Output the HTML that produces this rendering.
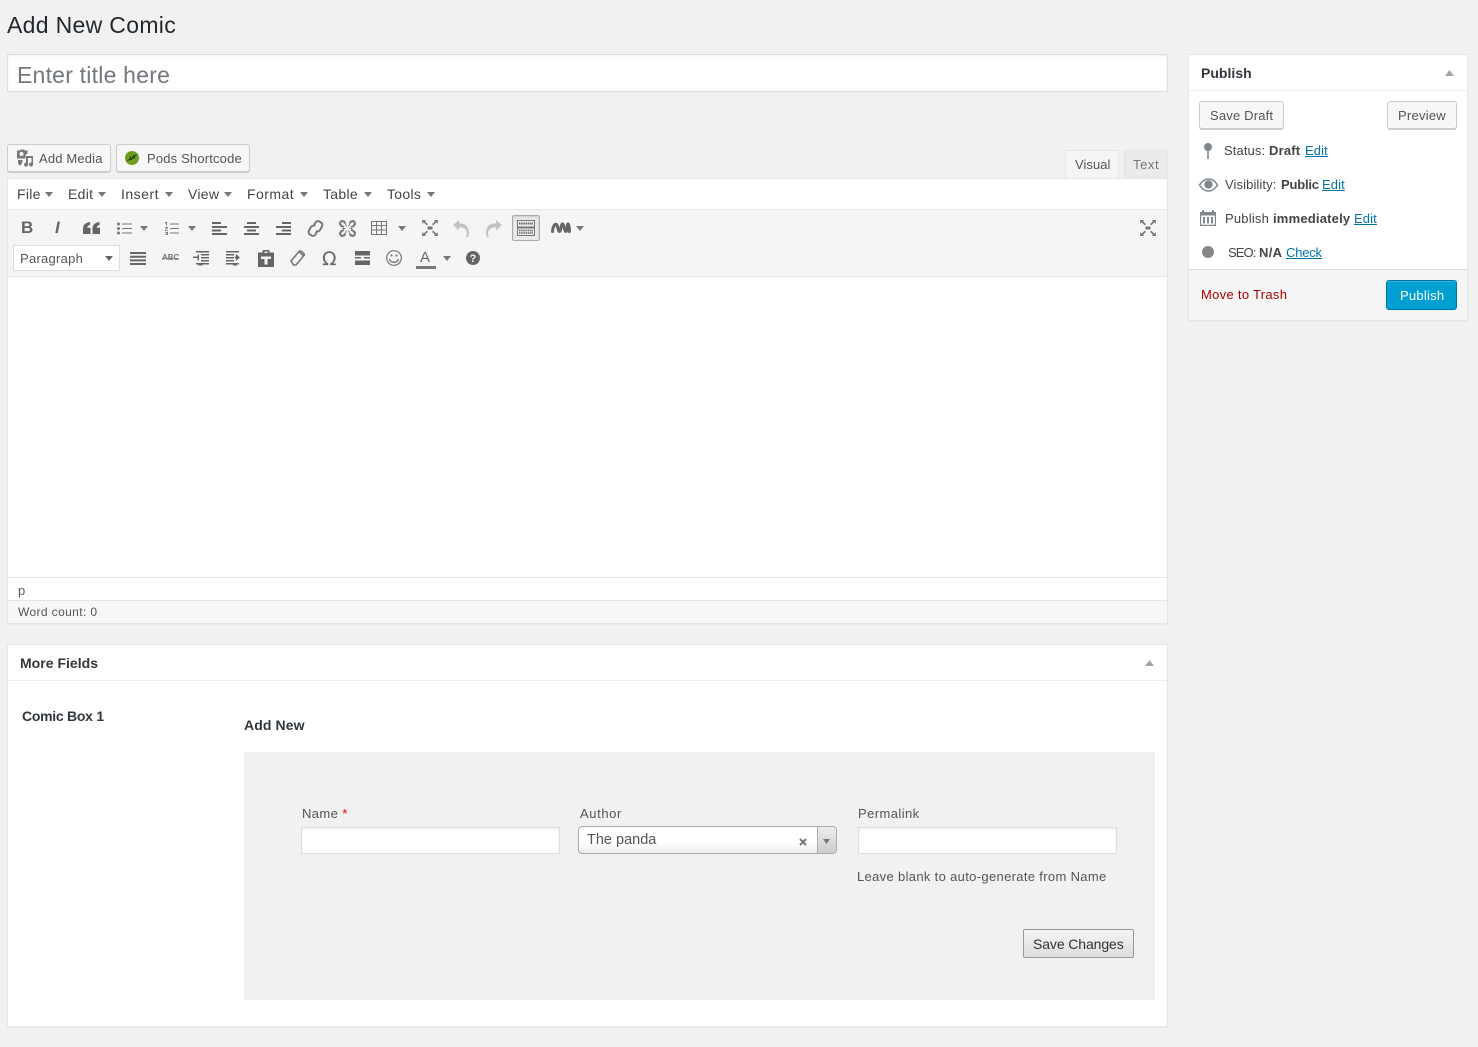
<!DOCTYPE html>
<html><head><meta charset="utf-8"><title>Add New Comic</title>
<style>
html,body{margin:0;padding:0;width:1478px;height:1047px;overflow:hidden;background:#f1f1f1}
body{position:relative;font-family:"Liberation Sans",sans-serif;font-size:13px;color:#444}
.b{position:absolute;box-sizing:border-box}
.t{position:absolute;white-space:nowrap;line-height:20px;font-size:13px;letter-spacing:.38px;color:#444}
.btn{position:absolute;box-sizing:border-box;background:#f7f7f7;border:1px solid #ccc;border-radius:3px;box-shadow:0 1px 0 #ccc}
.g{color:#555}
.m{color:#444;font-size:14px;letter-spacing:.3px}
.k{font-weight:bold;color:#444}
a{color:#0073aa;text-decoration:underline}
svg{position:absolute;overflow:visible}
.bx{background:#fff;border:1px solid #e5e5e5;box-shadow:0 1px 1px rgba(0,0,0,.04)}
.inp{background:#fff;border:1px solid #ddd;box-shadow:inset 0 1px 2px rgba(0,0,0,.07)}
</style></head><body>

<div class="t" style="left:7px;top:10px;line-height:30px;font-size:23px;letter-spacing:.32px;color:#23282d">Add New Comic</div>

<div class="b inp" style="left:7px;top:54px;width:1161px;height:38px"></div>
<div class="t" style="left:17px;top:60px;line-height:30px;font-size:23px;letter-spacing:.22px;color:#72777c">Enter title here</div>

<!-- media buttons -->
<div class="btn" style="left:7px;top:144px;width:104px;height:28px"></div>
<svg style="left:15px;top:149px" width="20" height="18" viewBox="0 0 20 18" fill="#777"><path d="M2 1.500h3l1-1h3l1 1h2.500v3l-2 1.500v3.500H2z"/><circle cx="6.500" cy="5" r="2.100" fill="#f7f7f7"/><path d="M3 11h4.500v2L5.500 16.500h-1L3 14zM11 7h7v8.500a2 2 0 1 1-1.500-1.900v-4.600h-3.500v6.500a2 2 0 1 1-2-1.900z"/></svg>
<div class="t g" style="left:39px;top:149px;letter-spacing:.16px">Add Media</div>
<div class="btn" style="left:116px;top:144px;width:134px;height:28px"></div>
<svg style="left:125px;top:151px" width="14" height="14" viewBox="0 0 14 14"><circle cx="7" cy="7" r="7" fill="#6f9e1e"/><path d="M2.500 9.500c3-1 6-3 9-6M5 5.500l1.500 2.500M8 4l1 2.500M4 8l3 .5M7 6.500l3 .5" stroke="#1f3d0c" stroke-width="1.100" fill="none"/></svg>
<div class="t g" style="left:147px;top:149px;letter-spacing:.17px">Pods Shortcode</div>

<!-- tabs -->
<div class="b" style="left:1065px;top:150px;width:54px;height:29px;background:#f5f5f5;border:1px solid #e5e5e5;border-bottom:0"></div>
<div class="t g" style="left:1075px;top:155px;letter-spacing:.05px">Visual</div>
<div class="b" style="left:1124px;top:150px;width:44px;height:29px;background:#ebebeb;border:1px solid #e5e5e5"></div>
<div class="t" style="left:1133px;top:155px;color:#777;letter-spacing:.6px">Text</div>

<!-- editor -->
<div class="b bx" style="left:7px;top:178px;width:1161px;height:446px"></div>
<div class="b" style="left:8px;top:209px;width:1159px;height:68px;background:#f5f5f5;border-top:1px solid #e5e5e5;border-bottom:1px solid #e5e5e5"></div>
<div class="b" style="left:8px;top:577px;width:1159px;height:1px;background:#e5e5e5"></div>
<div class="b" style="left:8px;top:600px;width:1159px;height:23px;background:#f7f7f7;border-top:1px solid #e5e5e5"></div>

<!-- menu -->
<div class="t m" style="left:17px;top:184px">File</div><svg style="left:45px;top:192px" width="8" height="5"><path d="M0 0h8L4 5z" fill="#777"/></svg>
<div class="t m" style="left:68px;top:184px">Edit</div><svg style="left:98px;top:192px" width="8" height="5"><path d="M0 0h8L4 5z" fill="#777"/></svg>
<div class="t m" style="left:121px;top:184px;letter-spacing:.5px">Insert</div><svg style="left:165px;top:192px" width="8" height="5"><path d="M0 0h8L4 5z" fill="#777"/></svg>
<div class="t m" style="left:188px;top:184px">View</div><svg style="left:224px;top:192px" width="8" height="5"><path d="M0 0h8L4 5z" fill="#777"/></svg>
<div class="t m" style="left:247px;top:184px;letter-spacing:.45px">Format</div><svg style="left:300px;top:192px" width="8" height="5"><path d="M0 0h8L4 5z" fill="#777"/></svg>
<div class="t m" style="left:323px;top:184px">Table</div><svg style="left:364px;top:192px" width="8" height="5"><path d="M0 0h8L4 5z" fill="#777"/></svg>
<div class="t m" style="left:387px;top:184px">Tools</div><svg style="left:427px;top:192px" width="8" height="5"><path d="M0 0h8L4 5z" fill="#777"/></svg>

<!-- toolbar row 1 -->
<div class="t" style="left:21px;top:218px;font-size:17px;font-weight:bold;color:#666;letter-spacing:0">B</div>
<div class="t" style="left:55px;top:218px;font-size:17px;font-weight:bold;font-style:italic;color:#666;letter-spacing:0">I</div>
<svg style="left:83px;top:222px" width="17" height="12" viewBox="0 0 17 12" fill="#666"><path d="M7 0v3c-1.500.3-2.500 1-2.800 2.700H7.500V12H0V6.500C0 3 2.500.5 7 0zM16.500 0v3c-1.500.3-2.500 1-2.800 2.700H17V12H9.500V6.500C9.500 3 12 .5 16.500 0z"/></svg>
<svg style="left:117px;top:222px" width="15" height="13" viewBox="0 0 15 13" fill="#777"><circle cx="1.500" cy="2" r="1.500"/><circle cx="1.500" cy="6.500" r="1.500"/><circle cx="1.500" cy="11" r="1.500"/><path d="M5 1.500h10v1H5zM5 6h10v1H5zM5 10.500h10v1H5z"/></svg>
<svg style="left:140px;top:226px" width="8" height="5"><path d="M0 0h8L4 5z" fill="#777"/></svg>
<svg style="left:165px;top:222px" width="14" height="13" viewBox="0 0 14 13" fill="#777"><path d="M0 0h2v3.500H1V1H0zM0 5h3v1L1 8h2v.7H0V8l2-2H0zM0 10h3v3H0v-.7h2v-.5H1v-.6h1v-.5H0zM5 1.500h9v1H5zM5 6h9v1H5zM5 10.500h9v1H5z"/></svg>
<svg style="left:188px;top:226px" width="8" height="5"><path d="M0 0h8L4 5z" fill="#777"/></svg>
<svg style="left:212px;top:222px" width="15" height="13" fill="#666"><path d="M0 0h9v2H0zM0 4h15v2H0zM0 7.500h9v2H0zM0 11h15v2H0z"/></svg>
<svg style="left:244px;top:222px" width="15" height="13" fill="#666"><path d="M3 0h9v2H3zM0 4h15v2H0zM3 7.500h9v2H3zM0 11h15v2H0z"/></svg>
<svg style="left:276px;top:222px" width="15" height="13" fill="#666"><path d="M6 0h9v2H6zM0 4h15v2H0zM6 7.500h9v2H6zM0 11h15v2H0z"/></svg>
<svg style="left:307px;top:220px" width="17" height="17" viewBox="0 0 17 17" fill="none" stroke="#777" stroke-width="2"><path d="M7 6l1.500-3.500a3 3 0 0 1 4-1l1.500 1a3 3 0 0 1 1 4L13 10a3 3 0 0 1-4 1"/><path d="M10 11l-1.500 3.500a3 3 0 0 1-4 1l-1.500-1a3 3 0 0 1-1-4L4 7a3 3 0 0 1 4-1"/></svg>
<svg style="left:339px;top:220px" width="17" height="17" viewBox="0 0 17 17" fill="none" stroke="#777" stroke-width="2"><path d="M6.500 3.500L5 1.500 3 1 1.500 2 1 4l1.500 2 2.500 1M10.500 3.500l1.500-2 2-.5 1.500 1 .5 2-1.500 2-2.500 1M6.500 13.500L5 15.500 3 16l-1.500-1L1 13l1.500-2 2.500-1M10.500 13.500l1.500 2 2 .5 1.500-1 .5-2-1.500-2-2.500-1"/><path d="M7.500 6.500L6.500 4M9.500 6.500l1-2.500M7.500 10.500l-1 2.500M9.500 10.500l1 2.500M6.500 8.500H3.500M10.500 8.500h3" stroke-width="1"/></svg>
<svg style="left:371px;top:221px" width="16" height="14" viewBox="0 0 16 14" fill="none" stroke="#777"><path d="M.5.500h15v13H.5zM.5 4.500h15M.5 9h15M5.500.500v13M10.500.500v13"/></svg>
<svg style="left:398px;top:226px" width="8" height="5"><path d="M0 0h8L4 5z" fill="#777"/></svg>
<svg style="left:422px;top:220px" width="16" height="16" viewBox="0 0 16 16" fill="#777"><path d="M5.500 6.500h5v3h-5z"/><path d="M0 0h4L3 1.200l3 3-1.200 1.200-3-3L.5 4zM16 0h-4l1 1.200-3 3 1.200 1.200 3-3 1.300 1.600zM0 16h4l-1-1.200 3-3-1.200-1.200-3 3L.5 12zM16 16h-4l1-1.200-3-3 1.200-1.200 3 3 1.300-1.600z"/></svg>
<svg style="left:453px;top:220px" width="17" height="17" viewBox="0 0 17 17" fill="#c4c4c4"><path d="M0 5l6-5v3.200c6 0 10 3 10 9.300 0 1.500-.4 3-1 4.500h-2c.6-1.300.8-2.500.8-3.800 0-3.700-2.800-6-7.800-6v3.300z"/></svg>
<svg style="left:485px;top:220px" width="17" height="17" viewBox="0 0 17 17" fill="#c4c4c4"><path d="M17 5l-6-5v3.200c-6 0-10 3-10 9.300 0 1.500.4 3 1 4.500h2c-.6-1.300-.8-2.500-.8-3.800 0-3.700 2.800-6 7.800-6v3.300z"/></svg>
<div class="b" style="left:512px;top:215px;width:28px;height:26px;background:#ebebeb;border:1px solid #aaa;border-radius:2px;box-shadow:inset 0 1px 2px rgba(0,0,0,.15)"></div>
<svg style="left:517px;top:220px" width="18" height="16" viewBox="0 0 18 16"><path d="M.5.500h17v15H.5z" fill="none" stroke="#777"/><path d="M.5 7.500h17" stroke="#777" stroke-width="2"/><path d="M2 3.500h14" stroke="#666" stroke-width="2" stroke-dasharray="1.500 .7"/><path d="M2 10.500h14M2 13h14" stroke="#666" stroke-width="1.500" stroke-dasharray="1.500 .7"/></svg>
<svg style="left:551px;top:222px" width="20" height="12" viewBox="0 0 20 12" fill="none" stroke="#666" stroke-width="3" stroke-linejoin="round" stroke-linecap="round"><path d="M1.500 9.500C2 4 4 1.500 5.500 2.500S7 9.500 8.500 9.500 10 2 11.500 2 13.500 9.500 15 9.500 16 2 17 2s1.300 4 1.500 7.500"/></svg>
<svg style="left:576px;top:226px" width="8" height="5"><path d="M0 0h8L4 5z" fill="#777"/></svg>
<svg style="left:1140px;top:220px" width="16" height="16" viewBox="0 0 16 16" fill="#777"><path d="M5.500 6.500h5v3h-5z"/><path d="M0 0h4L3 1.200l3 3-1.200 1.200-3-3L.5 4zM16 0h-4l1 1.200-3 3 1.200 1.200 3-3 1.300 1.600zM0 16h4l-1-1.200 3-3-1.200-1.200-3 3L.5 12zM16 16h-4l1-1.200-3-3 1.200-1.200 3 3 1.300-1.600z"/></svg>

<!-- toolbar row 2 -->
<div class="b" style="left:13px;top:245px;width:107px;height:26px;background:#fff;border:1px solid #ddd"></div>
<div class="t g" style="left:20px;top:249px;letter-spacing:.27px">Paragraph</div>
<svg style="left:105px;top:256px" width="8" height="5"><path d="M0 0h8L4 5z" fill="#666"/></svg>
<svg style="left:130px;top:252px" width="16" height="13" fill="#666"><path d="M0 0h16v2H0zM0 3.700h16v2H0zM0 7.400h16v2H0zM0 11h16v2H0z"/></svg>
<div class="t" style="left:162px;top:248px;font-size:8px;font-weight:bold;letter-spacing:0;color:#777">ABC</div>
<div class="b" style="left:162px;top:258px;width:16px;height:1px;background:#888"></div>
<svg style="left:193px;top:251px" width="16" height="15" fill="#666"><path d="M3 0h13v1.500H3zM8 3h8v1.500H8zM8 6h8v1.500H8zM8 9h8v1.500H8zM3 12h13v1.500H3zM6 3v7l-1.500-1.500V7H0V5.500h4.500V4.500zM5.500 13h4v1.500h-4z"/></svg>
<svg style="left:226px;top:251px" width="16" height="15" fill="#666"><path d="M0 0h13v1.500H0zM0 3h8v1.500H0zM0 6h8v1.500H0zM0 9h8v1.500H0zM0 12h13v1.500H0zM10 3l4 3.500-4 3.500V7.500H9v-2h1zM7 13h4v1.500H7z"/></svg>
<svg style="left:258px;top:250px" width="16" height="17" viewBox="0 0 16 17"><path d="M0 2.500h4.500V1q0-1 1-1h5q1 0 1 1v1.500H16V17H0z" fill="#666"/><path d="M6.500 1.500h3v1.500h-3zM3 6.500h10v2.500h-3.500v5.500h-3V9H3z" fill="#f5f5f5"/></svg>
<svg style="left:290px;top:250px" width="15" height="16" viewBox="0 0 15 16" fill="none" stroke="#777" stroke-width="1.600"><path d="M1 11l8-9.500q1-1 2-.3l2.800 2.300q1 1 .2 2L6 15H3.500z"/><path d="M9 2l5 4" /></svg>
<div class="t" style="left:322px;top:249px;font-size:19px;color:#666;letter-spacing:0;font-family:'DejaVu Sans',sans-serif">Ω</div>
<svg style="left:355px;top:251px" width="15" height="14" fill="#666"><path d="M0 0h15v4.500H0zM0 6h6v1.500H0zM9 6h6v1.500H9zM0 9.500h15V14H0z"/></svg>
<svg style="left:386px;top:250px" width="16" height="16" viewBox="0 0 16 16" fill="none" stroke="#777" stroke-width="1.200"><circle cx="8" cy="8" r="7.300"/><path d="M3.500 9c1 4.500 8 4.500 9 0" stroke-width="1.500"/><circle cx="5.500" cy="5.500" r="1.100" fill="#777" stroke="none"/><circle cx="10.500" cy="5.500" r="1.100" fill="#777" stroke="none"/></svg>
<div class="t" style="left:420px;top:248px;font-size:15px;letter-spacing:0;color:#666">A</div>
<div class="b" style="left:416px;top:266px;width:20px;height:3px;background:#777"></div>
<svg style="left:443px;top:256px" width="8" height="5"><path d="M0 0h8L4 5z" fill="#777"/></svg>
<svg style="left:466px;top:251px" width="14" height="14" viewBox="0 0 14 14"><circle cx="7" cy="7" r="7" fill="#666"/><text x="7" y="11" font-family="Liberation Sans" font-size="11" font-weight="bold" fill="#f5f5f5" text-anchor="middle">?</text></svg>

<div class="t" style="left:18px;top:581px;font-size:13px;color:#555">p</div>
<div class="t" style="left:18px;top:602px;font-size:12px;color:#555">Word count: 0</div>

<!-- More Fields -->
<div class="b bx" style="left:7px;top:644px;width:1161px;height:383px"></div>
<div class="b" style="left:8px;top:680px;width:1159px;height:1px;background:#eee"></div>
<div class="t" style="left:20px;top:653px;font-size:14px;font-weight:bold;color:#32373c;letter-spacing:.02px">More Fields</div>
<svg style="left:1145px;top:660px" width="9" height="6"><path d="M0 6h9L4.500 0z" fill="#a0a5aa"/></svg>
<div class="t" style="left:22px;top:706px;font-size:14px;font-weight:bold;color:#32373c;letter-spacing:-.27px">Comic Box 1</div>
<div class="t" style="left:244px;top:715px;font-size:14px;font-weight:bold;color:#32373c;letter-spacing:.1px">Add New</div>
<div class="b" style="left:244px;top:752px;width:911px;height:248px;background:#f1f1f1"></div>

<div class="t g" style="left:302px;top:804px">Name <span style="color:#d00">*</span></div>
<div class="b inp" style="left:301px;top:827px;width:259px;height:27px"></div>
<div class="t g" style="left:580px;top:804px;letter-spacing:.6px">Author</div>
<div class="b" style="left:578px;top:826px;width:259px;height:28px;border:1px solid #aaa;border-radius:4px;background:linear-gradient(#fff 60%,#eee);overflow:hidden">
  <div class="b" style="right:0;top:0;width:19px;height:26px;border-left:1px solid #aaa;background:linear-gradient(#eee,#ccc)"></div>
</div>
<div class="t g" style="left:587px;top:830px;font-size:14.500px;letter-spacing:0">The panda</div>
<svg style="left:799px;top:838px" width="8" height="8" viewBox="0 0 8 8"><path d="M1 1l6 6M7 1L1 7" stroke="#777" stroke-width="2"/></svg>
<svg style="left:823px;top:839px" width="7" height="5"><path d="M0 0h7L3.500 5z" fill="#777"/></svg>
<div class="t g" style="left:858px;top:804px;letter-spacing:.42px">Permalink</div>
<div class="b inp" style="left:858px;top:827px;width:259px;height:27px"></div>
<div class="t g" style="left:857px;top:867px;letter-spacing:.33px">Leave blank to auto-generate from Name</div>
<div class="b" style="left:1023px;top:929px;width:111px;height:29px;border:1px solid #999;border-radius:2px;background:linear-gradient(#f5f5f5,#ddd)"></div>
<div class="t" style="left:1033px;top:934px;font-size:14px;letter-spacing:-.1px;color:#333">Save Changes</div>

<!-- Publish -->
<div class="b bx" style="left:1188px;top:54px;width:280px;height:267px"></div>
<div class="b" style="left:1189px;top:90px;width:278px;height:1px;background:#eee"></div>
<div class="t" style="left:1201px;top:63px;font-size:14px;font-weight:bold;color:#32373c;letter-spacing:.02px">Publish</div>
<svg style="left:1445px;top:70px" width="9" height="6"><path d="M0 6h9L4.500 0z" fill="#a0a5aa"/></svg>
<div class="btn" style="left:1199px;top:101px;width:85px;height:28px"></div>
<div class="t g" style="left:1210px;top:106px;letter-spacing:.18px">Save Draft</div>
<div class="btn" style="left:1387px;top:101px;width:70px;height:28px"></div>
<div class="t g" style="left:1398px;top:106px;letter-spacing:.24px">Preview</div>

<svg style="left:1203px;top:143px" width="10" height="16" viewBox="0 0 10 16" fill="#82878c"><circle cx="5" cy="4" r="4"/><path d="M4.200 7h1.600v9H4.200z"/></svg>
<div class="t" style="left:1224px;top:141px;letter-spacing:.1px">Status:</div>
<div class="t k" style="left:1269px;top:141px;letter-spacing:.2px">Draft</div>
<div class="t" style="left:1305px;top:141px;letter-spacing:.13px"><a>Edit</a></div>
<svg style="left:1199px;top:178px" width="19" height="14" viewBox="0 0 19 14"><path d="M.5 7C3 3 6 1 9.500 1S16 3 18.500 7C16 11 13 13 9.500 13S3 11 .5 7z" fill="none" stroke="#82878c" stroke-width="1.500"/><circle cx="9.500" cy="6.500" r="4.200" fill="#82878c"/></svg>
<div class="t" style="left:1225px;top:175px;letter-spacing:.1px">Visibility:</div>
<div class="t k" style="left:1281px;top:175px;letter-spacing:-.2px">Public</div>
<div class="t" style="left:1322px;top:175px;letter-spacing:.13px"><a>Edit</a></div>
<svg style="left:1200px;top:210px" width="16" height="16" viewBox="0 0 16 16" fill="#82878c"><path d="M0 2h2V0h2v2h8V0h2v2h2v14H0zM1.200 5.500v9.300h13.600V5.500z"/><path d="M3 7h2v6.500H3zM7 7h2v6.500H7zM11 7h2v6.500h-2z"/></svg>
<div class="t" style="left:1225px;top:209px;letter-spacing:.2px">Publish</div>
<div class="t k" style="left:1273px;top:209px;letter-spacing:.2px">immediately</div>
<div class="t" style="left:1354px;top:209px;letter-spacing:.13px"><a>Edit</a></div>
<div class="b" style="left:1202px;top:246px;width:12px;height:12px;border-radius:50%;background:#888"></div>
<div class="t" style="left:1228px;top:243px;letter-spacing:-.9px">SEO:</div>
<div class="t k" style="left:1259px;top:243px;letter-spacing:.3px">N/A</div>
<div class="t" style="left:1286px;top:243px;letter-spacing:-.2px"><a>Check</a></div>

<div class="b" style="left:1189px;top:269px;width:278px;height:51px;background:#f5f5f5;border-top:1px solid #ddd"></div>
<div class="t" style="left:1201px;top:285px;color:#a00;letter-spacing:.3px">Move to Trash</div>
<div class="b" style="left:1386px;top:280px;width:71px;height:30px;background:#00a0d2;border:1px solid #0073aa;border-radius:3px;box-shadow:inset 0 1px 0 rgba(120,200,230,.5)"></div>
<div class="t" style="left:1400px;top:286px;color:#fff;letter-spacing:.24px">Publish</div>

</body></html>
